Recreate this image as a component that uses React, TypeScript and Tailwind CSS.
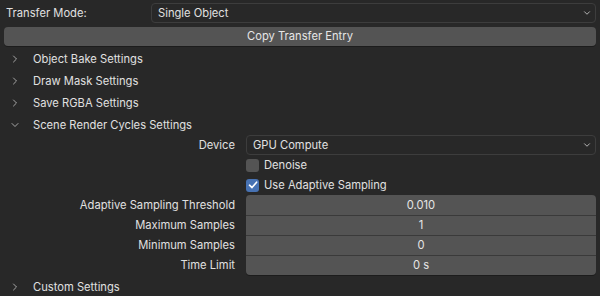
import { ChevronDown, ChevronRight } from "lucide-react";

const panels = ["Object Bake Settings", "Draw Mask Settings", "Save RGBA Settings"];

const numFields = [
  { label: "Adaptive Sampling Threshold", value: "0.010" },
  { label: "Maximum Samples", value: "1" },
  { label: "Minimum Samples", value: "0" },
  { label: "Time Limit", value: "0 s" },
];

function PanelHeader({ title, open = false }: { title: string; open?: boolean }) {
  return (
    <div className="flex h-[22px] items-center">
      <span className="flex w-[29px] justify-center text-[#cfcfcf]">
        {open ? <ChevronDown size={12} strokeWidth={1.5} /> : <ChevronRight size={12} strokeWidth={1.5} />}
      </span>
      <span className="pl-[4px] text-[#e0e0e0]">{title}</span>
    </div>
  );
}

function Checkbox({ label, checked }: { label: string; checked: boolean }) {
  return (
    <div className="flex h-[20px] items-center gap-[5px] pl-[246px]">
      <span
        className={
          checked
            ? "flex h-[13px] w-[13px] items-center justify-center rounded-[3px] bg-[#4772b3]"
            : "h-[13px] w-[13px] rounded-[3px] bg-[#545454]"
        }
      >
        {checked && (
          <svg width="10" height="10" viewBox="0 0 10 10">
            <path d="M1.5 5.2 L4 7.6 L8.6 2.2" fill="none" stroke="#ffffff" strokeWidth="1.6" strokeLinecap="round" strokeLinejoin="round" />
          </svg>
        )}
      </span>
      <span className="text-[#e0e0e0]">{label}</span>
    </div>
  );
}

export default function App() {
  return (
    <div
      className="h-[296px] w-[600px] overflow-hidden bg-[#282828] text-[11.2px] text-[#e0e0e0]"
      style={{ fontFamily: "Inter, 'DejaVu Sans', sans-serif" }}
    >
      {/* Transfer mode */}
      <div className="flex h-[26px] items-center">
        <span className="w-[151px] pl-[6px]">Transfer Mode:</span>
        <div className="mr-[4px] flex h-[20px] flex-1 items-center justify-between rounded-[4px] border border-[#3d3d3d] bg-[#282828] pl-[6px] pr-[3px]">
          <span>Single Object</span>
          <ChevronDown size={10} strokeWidth={2} className="text-[#cfcfcf]" />
        </div>
      </div>

      {/* Copy button */}
      <div className="px-[4px] pt-[1px]">
        <div className="flex h-[19px] items-center justify-center rounded-[4px] bg-[#545454] text-[#e6e6e6] shadow-[0_1px_0_#1c1c1c]">
          Copy Transfer Entry
        </div>
      </div>

      <div className="pt-[2px]">
        {panels.map((p) => (
          <PanelHeader key={p} title={p} />
        ))}
        <PanelHeader title="Scene Render Cycles Settings" open />
      </div>

      {/* Device */}
      <div className="-mt-[1px] flex h-[20px] items-center">
        <span className="w-[235px] text-right">Device</span>
        <div className="ml-[11px] mr-[4px] flex h-[20px] flex-1 items-center justify-between rounded-[4px] border border-[#3d3d3d] bg-[#282828] pl-[6px] pr-[3px]">
          <span>GPU Compute</span>
          <ChevronDown size={10} strokeWidth={2} className="text-[#cfcfcf]" />
        </div>
      </div>

      <Checkbox label="Denoise" checked={false} />
      <Checkbox label="Use Adaptive Sampling" checked />

      {/* Numeric fields */}
      <div className="flex">
        <div className="flex w-[235px] flex-col">
          {numFields.map((f) => (
            <div key={f.label} className="flex h-[20px] items-center justify-end">
              {f.label}
            </div>
          ))}
        </div>
        <div className="ml-[11px] mr-[4px] flex flex-1 flex-col overflow-hidden rounded-[4px] bg-[#545454] shadow-[0_1px_0_#1c1c1c]">
          {numFields.map((f, i) => (
            <div
              key={f.label}
              className={
                i === 0
                  ? "flex h-[20px] items-center justify-center text-[#e6e6e6]"
                  : "flex h-[20px] items-center justify-center border-t border-[#3a3a3a] text-[#e6e6e6]"
              }
            >
              {f.value}
            </div>
          ))}
        </div>
      </div>

      <div className="pt-[1px]">
        <PanelHeader title="Custom Settings" />
      </div>
    </div>
  );
}
